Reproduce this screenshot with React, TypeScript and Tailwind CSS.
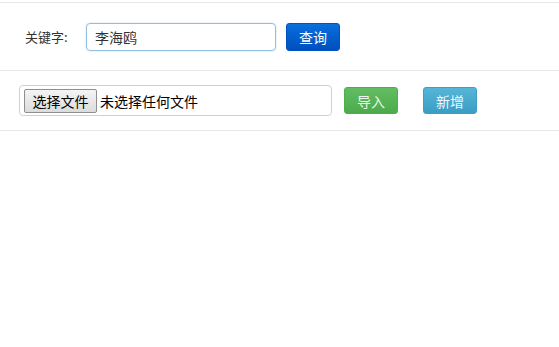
import React from "react";

const font = { fontFamily: '"Noto Sans CJK SC", "Liberation Sans", sans-serif' };

export default function App() {
  return (
    <div className="w-[559px] h-[347px] bg-white text-[#333]" style={font}>
      <div className="h-[2px]" />
      <div className="border-t border-[#e6e6e6] h-[68px] flex items-center pl-[25px]">
        <span className="w-[61px] text-[13px] leading-none text-[#333]">关键字:</span>
        <div className="w-[190px] h-[28px] border border-[#8fbfe0] rounded-[4px] flex items-center px-[8px] shadow-[0_0_2px_rgba(102,175,233,0.4)]">
          <span className="text-[14px] leading-none text-[#333]">李海鸥</span>
        </div>
        <button className="ml-[10px] w-[54px] h-[28px] rounded-[3px] bg-gradient-to-b from-[#0b6fdc] to-[#004fbf] border border-[#0052c0] text-white text-[14px] leading-none flex items-center justify-center">
          查询
        </button>
      </div>
      <div className="border-t border-[#e6e6e6] h-[60px] flex items-center">
        <div className="ml-[19px] w-[313px] h-[31px] border border-[#d0d0d0] rounded-[4px] flex items-center pl-[4px]">
          <div className="w-[73px] h-[24px] border border-[#8f8f8f] rounded-[2px] bg-gradient-to-b from-[#f4f4f4] to-[#dcdcdc] text-[14px] leading-none text-black flex items-center justify-center">
            选择文件
          </div>
          <span className="ml-[3px] text-[14px] leading-none text-black">未选择任何文件</span>
        </div>
        <button className="ml-[12px] w-[54px] h-[27px] rounded-[3px] bg-gradient-to-b from-[#62bd62] to-[#4caa4c] border border-[#4cae4c] text-[#eaf6ea] text-[14px] leading-none flex items-center justify-center">
          导入
        </button>
        <button className="ml-[25px] w-[54px] h-[27px] rounded-[3px] bg-gradient-to-b from-[#55b6d8] to-[#3a9dc4] border border-[#3ba0c6] text-[#eef8fc] text-[14px] leading-none flex items-center justify-center">
          新增
        </button>
      </div>
      <div className="border-t border-[#e6e6e6]" />
    </div>
  );
}
